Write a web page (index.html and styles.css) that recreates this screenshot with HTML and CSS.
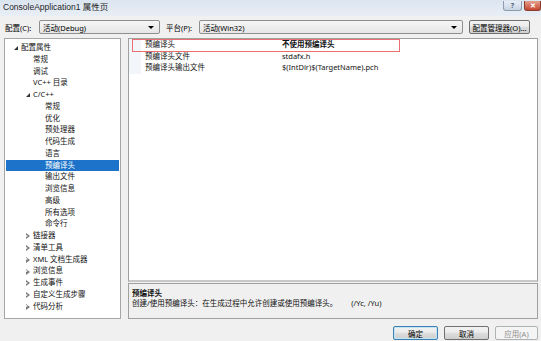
FILE: index.html
```html
<!DOCTYPE html>
<html lang="zh-CN">
<head>
    <meta charset="UTF-8">
    <title>ConsoleApplication1 属性页</title>
    <link rel="stylesheet" href="styles.css">
</head>
<body>
    <div class="window">
        <div class="titlebar">
            <span class="title">ConsoleApplication1 属性页</span>
            <div class="caption-buttons">
                <span class="cap-btn help">?</span>
                <span class="cap-btn close">✕</span>
            </div>
        </div>

        <div class="toolbar">
            <span class="label">配置(C):</span>
            <div class="combo combo-config"><span>活动(Debug)</span><i class="arrow"></i></div>
            <span class="label label-platform">平台(P):</span>
            <div class="combo combo-platform"><span>活动(Win32)</span><i class="arrow"></i></div>
            <button class="btn btn-manager">配置管理器(O)...</button>
        </div>

        <div class="main">
            <ul class="tree">
                <li class="lvl0"><span class="twisty open"></span>配置属性</li>
                <li class="lvl1"><span class="twisty"></span>常规</li>
                <li class="lvl1"><span class="twisty"></span>调试</li>
                <li class="lvl1"><span class="twisty"></span>VC++ 目录</li>
                <li class="lvl1"><span class="twisty open"></span>C/C++</li>
                <li class="lvl2"><span class="twisty"></span>常规</li>
                <li class="lvl2"><span class="twisty"></span>优化</li>
                <li class="lvl2"><span class="twisty"></span>预处理器</li>
                <li class="lvl2"><span class="twisty"></span>代码生成</li>
                <li class="lvl2"><span class="twisty"></span>语言</li>
                <li class="lvl2 selected"><span class="twisty"></span>预编译头</li>
                <li class="lvl2"><span class="twisty"></span>输出文件</li>
                <li class="lvl2"><span class="twisty"></span>浏览信息</li>
                <li class="lvl2"><span class="twisty"></span>高级</li>
                <li class="lvl2"><span class="twisty"></span>所有选项</li>
                <li class="lvl2"><span class="twisty"></span>命令行</li>
                <li class="lvl1"><span class="twisty closed"></span>链接器</li>
                <li class="lvl1"><span class="twisty closed"></span>清单工具</li>
                <li class="lvl1"><span class="twisty closed"></span>XML 文档生成器</li>
                <li class="lvl1"><span class="twisty closed"></span>浏览信息</li>
                <li class="lvl1"><span class="twisty closed"></span>生成事件</li>
                <li class="lvl1"><span class="twisty closed"></span>自定义生成步骤</li>
                <li class="lvl1"><span class="twisty closed"></span>代码分析</li>
            </ul>

            <div class="right">
                <div class="grid">
                    <div class="row">
                        <span class="gutter"></span>
                        <span class="name">预编译头</span>
                        <span class="value bold">不使用预编译头</span>
                    </div>
                    <div class="row">
                        <span class="gutter"></span>
                        <span class="name">预编译头文件</span>
                        <span class="value">stdafx.h</span>
                    </div>
                    <div class="row">
                        <span class="gutter"></span>
                        <span class="name">预编译头输出文件</span>
                        <span class="value">$(IntDir)$(TargetName).pch</span>
                    </div>
                    <div class="mark"></div>
                </div>
                <div class="desc">
                    <div class="desc-title">预编译头</div>
                    <div>创建/使用预编译头：在生成过程中允许创建或使用预编译头。<span class="switches">(/Yc, /Yu)</span></div>
                </div>
            </div>
        </div>

        <div class="footer">
            <button class="btn default">确定</button>
            <button class="btn">取消</button>
            <button class="btn disabled">应用(A)</button>
        </div>
    </div>
</body>
</html>
```

FILE: styles.css
```css
* {
    box-sizing: border-box;
}
body {
    margin: 0;
    overflow: hidden;
}
.window {
    width: 541px;
    height: 341px;
    background: #f0f0f0;
    display: flex;
    flex-direction: column;
    font-family: "Noto Sans", "Noto Sans CJK SC", sans-serif;
    font-size: 7.5px;
    color: #000;
    overflow: hidden;
}

/* title bar */
.titlebar {
    height: 16px;
    display: flex;
    justify-content: space-between;
    align-items: flex-start;
    padding-left: 3px;
    background: linear-gradient(#dbe5f0, #e9eef5);
}
.title {
    font-family: "Liberation Sans", "Noto Sans CJK SC", sans-serif;
    font-size: 8.5px;
    line-height: 14px;
    color: #1e1e1e;
}
.caption-buttons {
    display: flex;
    gap: 2px;
    padding-top: 1px;
}
.cap-btn {
    height: 10px;
    display: flex;
    align-items: center;
    justify-content: center;
    font-size: 7px;
    font-weight: bold;
    border-radius: 0 0 3px 3px;
    border: 1px solid #8d9cb0;
    border-top: none;
}
.cap-btn.help {
    width: 19px;
    color: #4b5b70;
    background: linear-gradient(#e8eef6, #c9d5e4);
}
.cap-btn.close {
    width: 17px;
    color: #fff;
    background: linear-gradient(#e5a191, #c5452f);
    border-color: #8a3a2e;
}

/* toolbar */
.toolbar {
    height: 22px;
    display: flex;
    align-items: center;
    padding-left: 5px;
}
.label {
    width: 34px;
    flex: none;
}
.label-platform {
    width: 33px;
    margin-left: 6px;
}
.combo {
    height: 14px;
    flex: none;
    display: flex;
    align-items: center;
    justify-content: space-between;
    padding: 0 5px 0 3px;
    border: 1px solid #8e8f8f;
    border-radius: 2px;
    background: linear-gradient(#f6f6f6, #e6e6e6);
}
.combo-config {
    width: 121px;
}
.combo-platform {
    width: 264px;
}
.arrow {
    width: 0;
    height: 0;
    border-left: 3px solid transparent;
    border-right: 3px solid transparent;
    border-top: 3px solid #000;
}
.btn {
    height: 14px;
    padding: 0;
    font: inherit;
    color: #000;
    border: 1px solid #707070;
    border-radius: 2px;
    background: linear-gradient(#f2f2f2 0%, #ebebeb 45%, #dddddd 50%, #cfcfcf 100%);
}
.btn-manager {
    width: 61px;
    margin-left: 6px;
}
.btn.default {
    border-color: #3c7fb1;
    box-shadow: inset 0 0 0 1px #c4e5f6;
}
.btn.disabled {
    color: #8d8d8d;
    border-color: #adb2b5;
    background: #f4f4f4;
}

/* main area */
.main {
    height: 281px;
    display: flex;
    gap: 7px;
    padding: 0 3px 0 4px;
}
.tree {
    width: 117px;
    margin: 0;
    padding: 3px 1px 0;
    list-style: none;
    background: #fff;
    border: 1px solid #a6a6a6;
}
.tree li {
    height: 11.75px;
    line-height: 11.75px;
    display: flex;
    align-items: center;
    white-space: nowrap;
    color: #111;
}
.tree .lvl0 {
    padding-left: 5px;
}
.tree .lvl1 {
    padding-left: 17px;
}
.tree .lvl2 {
    padding-left: 29px;
}
.tree li.selected {
    background: #1c73c9;
    color: #fff;
}
.twisty {
    width: 10px;
    height: 11px;
    flex: none;
    position: relative;
}
.twisty.open::before {
    content: "";
    position: absolute;
    left: 3px;
    top: 4px;
    border-left: 4px solid transparent;
    border-bottom: 4px solid #333;
}
.twisty.closed::before {
    content: "";
    position: absolute;
    left: 3px;
    top: 3px;
    width: 0;
    height: 0;
    border-top: 3px solid transparent;
    border-bottom: 3px solid transparent;
    border-left: 4px solid #7a7a7a;
}
.twisty.closed::after {
    content: "";
    position: absolute;
    left: 3px;
    top: 4.5px;
    width: 0;
    height: 0;
    border-top: 1.5px solid transparent;
    border-bottom: 1.5px solid transparent;
    border-left: 2px solid #fff;
}

.right {
    width: 410px;
    display: flex;
    flex-direction: column;
    gap: 1px;
}
.grid {
    position: relative;
    height: 244px;
    background: #fff;
    border: 1px solid #a0a0a0;
    border-bottom: 2px solid #c8c8c8;
}
.row {
    height: 11.6px;
    line-height: 11.6px;
    display: flex;
    white-space: nowrap;
    color: #111;
}
.gutter {
    width: 12px;
    background: #f2f5fa;
}
.name {
    width: 141px;
    padding-left: 4px;
}
.value.bold {
    font-weight: bold;
}
.mark {
    position: absolute;
    left: 3px;
    top: 0;
    width: 268px;
    height: 13px;
    border: 1px solid #ea6f72;
}

.desc {
    height: 36px;
    padding: 4px 3px 0;
    line-height: 10px;
    border: 1px solid #a0a0a0;
    color: #111;
}
.desc-title {
    font-weight: bold;
}
.switches {
    margin-left: 14px;
}

/* footer */
.footer {
    flex: 1;
    display: flex;
    justify-content: flex-end;
    align-items: flex-start;
    gap: 6px;
    padding: 7px 3px 0 0;
}
.footer .btn {
    width: 45px;
}
.footer .btn.disabled {
    width: 43px;
}
```
